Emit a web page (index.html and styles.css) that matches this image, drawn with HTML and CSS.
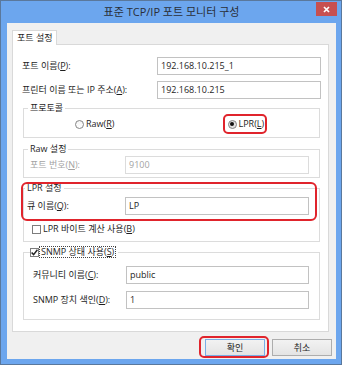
FILE: index.html
```html
<!DOCTYPE html>
<html lang="ko">
<head>
    <meta charset="UTF-8">
    <meta name="viewport" content="width=device-width, initial-scale=1.0">
    <title>표준 TCP/IP 포트 모니터 구성</title>
    <link rel="stylesheet" href="styles.css">
</head>
<body>
    <div class="window">
        <div class="titlebar">
            <span class="title">표준 TCP/IP 포트 모니터 구성</span>
            <span class="close">
                <svg width="7" height="7" viewBox="0 0 7 7"><path d="M1 1L6 6M6 1L1 6" stroke="#fff" stroke-width="1.7"/></svg>
            </span>
        </div>

        <div class="client">
            <div class="tabs">
                <span class="tab">포트 설정</span>
            </div>

            <div class="panel">
                <div class="row top">
                    <span class="label">포트 이름(<u>P</u>):</span>
                    <span class="field">192.168.10.215_1</span>
                </div>
                <div class="row top">
                    <span class="label">프린터 이름 또는 IP 주소(<u>A</u>):</span>
                    <span class="field">192.168.10.215</span>
                </div>

                <div class="group protocol">
                    <span class="group-title">프로토콜</span>
                    <div class="radios">
                        <div class="cell">
                            <span class="option"><span class="radio"></span><span>Raw(<u>R</u>)</span></span>
                        </div>
                        <div class="cell">
                            <span class="mark">
                                <span class="option"><span class="radio checked"></span><span>LPR(<u>L</u>)</span></span>
                            </span>
                        </div>
                    </div>
                </div>

                <div class="group raw">
                    <span class="group-title">Raw 설정</span>
                    <div class="row disabled">
                        <span class="label">포트 번호(<u>N</u>):</span>
                        <span class="field">9100</span>
                    </div>
                </div>

                <div class="group lpr">
                    <span class="group-title">LPR 설정</span>
                    <div class="row">
                        <span class="label">큐 이름(<u>Q</u>):</span>
                        <span class="field">LP</span>
                    </div>
                    <div class="check-row">
                        <span class="check"></span><span>LPR 바이트 계산 사용(<u>B</u>)</span>
                    </div>
                    <!-- red callout over the LPR settings -->
                    <span class="highlight"></span>
                </div>

                <div class="group snmp">
                    <span class="group-title">
                        <span class="check">
                            <svg width="7" height="7" viewBox="0 0 7 7"><path d="M0.6 3.4L2.6 5.6L6.4 0.8" fill="none" stroke="#222" stroke-width="1.5"/></svg>
                        </span><span class="focus">SNMP 상태 사용(<u>S</u>)</span>
                    </span>
                    <div class="row">
                        <span class="label">커뮤니티 이름(<u>C</u>):</span>
                        <span class="field">public</span>
                    </div>
                    <div class="row">
                        <span class="label">SNMP 장치 색인(<u>D</u>):</span>
                        <span class="field">1</span>
                    </div>
                </div>
            </div>

            <div class="buttons">
                <span class="mark">
                    <span class="button default">확인</span>
                </span>
                <span class="button">취소</span>
            </div>
        </div>
    </div>
</body>
</html>
```

FILE: styles.css
```css
* {
    margin: 0;
    padding: 0;
    box-sizing: border-box;
}

body {
    background: #fff;
    font-family: "Open Sans", "Noto Sans CJK KR", sans-serif;
    font-size: 9px;
    line-height: 12px;
    color: #1e1e1e;
}

u {
    text-decoration: underline;
    text-underline-offset: 1px;
}

.window {
    width: 342px;
    height: 365px;
    border: 1px solid #5a789c;
    background: #6ca6ee;
    padding: 0 5px 5px 6px;
    display: flex;
    flex-direction: column;
}

.titlebar {
    position: relative;
    height: 22px;
    display: flex;
    align-items: center;
    justify-content: center;
}

.title {
    font-size: 11px;
    color: #2a2f38;
}

.close {
    position: absolute;
    right: -1px;
    top: 1px;
    width: 21px;
    height: 14px;
    background: #c75050;
    display: flex;
    align-items: center;
    justify-content: center;
}

.client {
    flex: 1;
    background: #f0f0f0;
    padding: 7px 4px 0 5px;
}

.tabs {
    display: flex;
}

.tab {
    position: relative;
    height: 15px;
    margin-bottom: -1px;
    padding: 0 4px;
    line-height: 14px;
    background: #fff;
    border: 1px solid #d9d9d9;
    border-bottom: none;
}

.panel {
    margin-right: 3px;
    background: #fff;
    border: 1px solid #d9d9d9;
    padding: 12px 7px 11px 9px;
}

.row {
    display: flex;
    align-items: center;
    height: 18px;
}

.row .label {
    flex: 1;
}

.field {
    height: 18px;
    width: 184px;
    border: 1px solid #c2c2c2;
    background: #fff;
    padding-left: 3px;
    line-height: 16px;
}

.row.top .field {
    width: 164px;
}

.row.top + .row.top {
    margin-top: 6px;
}

.row.disabled .label,
.row.disabled .field {
    color: #a3a3a3;
}

.row.disabled .field {
    border-color: #dcdcdc;
}

/* group boxes */
.group {
    position: relative;
    margin: 10px 1px 0;
    border: 1px solid #dcdcdc;
}

.group-title {
    display: flex;
    align-items: center;
    width: fit-content;
    height: 12px;
    margin: -7px 0 0 4px;
    padding: 0 2px;
    background: #fff;
}

.group .row {
    padding-right: 10px;
}

.protocol {
    margin-top: 9px;
    padding-bottom: 3px;
}

.radios {
    display: grid;
    grid-template-columns: 1fr 1fr;
    height: 20px;
}

.cell {
    display: flex;
    align-items: center;
    padding-left: 51px;
}

.option {
    display: flex;
    align-items: center;
    gap: 2px;
}

.radio {
    width: 9px;
    height: 9px;
    border-radius: 50%;
    border: 1px solid #858585;
    background: linear-gradient(#f4f4f4, #fff);
    display: flex;
    align-items: center;
    justify-content: center;
}

.radio.checked {
    background: #e1e1e1;
}

.radio.checked::after {
    content: '';
    width: 4px;
    height: 4px;
    border-radius: 50%;
    background: #111;
}

.mark {
    border: 2px solid #e0242c;
    border-radius: 5px;
}

.cell .mark {
    display: flex;
    align-items: center;
    height: 20px;
    padding: 0 1px 0 3px;
}

.raw {
    margin-top: 11px;
    padding-bottom: 3px;
}

.raw .group-title {
    margin-left: 4px;
}

.raw .row {
    margin-top: 1px;
    padding-left: 6px;
}

.lpr {
    padding-bottom: 5px;
}

.lpr .group-title {
    margin-left: 1px;
}

.lpr .row {
    margin-top: 3px;
    padding-left: 3px;
}

.check-row {
    display: flex;
    align-items: center;
    gap: 2px;
    height: 14px;
    margin-top: 7px;
    padding-left: 8px;
}

.check {
    width: 9px;
    height: 9px;
    border: 1px solid #7d7d7d;
    background: #fff;
    display: flex;
    align-items: center;
    justify-content: center;
}

.highlight {
    position: absolute;
    left: -3px;
    top: -7px;
    width: 296px;
    height: 39px;
    border: 2px solid #e0242c;
    border-radius: 6px;
    pointer-events: none;
}

.snmp {
    padding-bottom: 10px;
}

.snmp .group-title {
    margin-left: 6px;
    padding: 0 2px 0 0;
}

.focus {
    border: 1px dotted #444;
    line-height: 10px;
    padding: 0 1px;
}

.snmp .row {
    padding-left: 9px;
    padding-right: 10px;
}

.snmp .field {
    width: 183px;
}

.snmp .group-title + .row {
    margin-top: 8px;
}

.snmp .row + .row {
    margin-top: 7px;
}

/* dialog buttons */
.buttons {
    display: flex;
    justify-content: flex-end;
    align-items: flex-start;
    gap: 3px;
    margin-top: 4px;
}

.buttons .mark {
    padding: 1px 2px 0 4px;
}

.button {
    display: block;
    width: 60px;
    height: 17px;
    border: 1px solid #adadad;
    background: linear-gradient(#f2f2f2, #e4e4e4);
    text-align: center;
    line-height: 15px;
}

.buttons > .button {
    margin-top: 3px;
}

.button.default {
    border-color: #78aee6;
}
```
